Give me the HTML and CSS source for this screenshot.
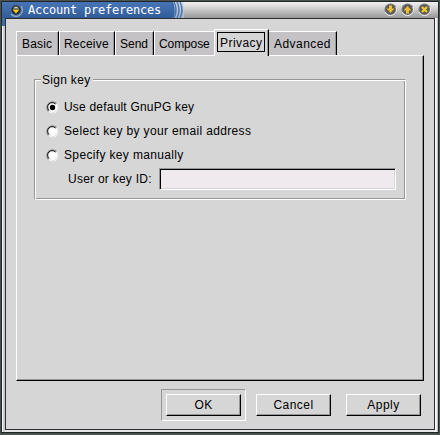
FILE: index.html
```
<!DOCTYPE html>
<html lang="en">
<head>
<meta charset="utf-8">
<title>Account preferences</title>
<link rel="stylesheet" href="styles.css">
</head>
<body>
<div class="window">
  <header class="titlebar">
    <div class="caption">
      <svg class="menu-icon" width="14" height="14" viewBox="0 0 14 14"><circle cx="7" cy="7" r="6" fill="#4d6f9c"/><path d="M2 11a6 6 0 0 0 10-8" fill="none" stroke="#8caad0" stroke-width="1.3"/><circle cx="7" cy="7" r="4.7" fill="#282f38"/><path d="M4 5.500q3-4 6 0z" fill="#c9c9c3"/><path d="M3.500 6.500h7L7 10.500z" fill="#f4cb20"/></svg>
      <h1>Account preferences</h1>
    </div>
    <svg class="waves" width="12" height="16" viewBox="0 0 12 16"><path d="M0 0h1q3 8 1 16H0z" fill="#3b66a5"/><path d="M2 0q4 8 0 16M5 0q4 8 0 16M8 0q4 8 0 16" fill="none" stroke="#4d78b1" stroke-width="1.6"/></svg>
    <div class="controls">
      <svg width="13" height="13" viewBox="0 0 13 13"><circle cx="6.5" cy="6.5" r="6" fill="#777"/><path d="M1 9a6 6 0 0 0 11-5" fill="none" stroke="#eee"/><circle cx="6.5" cy="6.5" r="4.7" fill="#5c5a56"/><path d="M5 2.5h3v3h2.5l-4 4.5-4-4.5H5z" fill="#efbd32"/></svg>
      <svg width="13" height="13" viewBox="0 0 13 13"><circle cx="6.5" cy="6.5" r="6" fill="#777"/><path d="M1 9a6 6 0 0 0 11-5" fill="none" stroke="#eee"/><circle cx="6.5" cy="6.5" r="4.7" fill="#5c5a56"/><path d="M5 10.500h3v-3h2.500l-4-4.500-4 4.500H5z" fill="#efbd32"/></svg>
      <svg width="13" height="13" viewBox="0 0 13 13"><circle cx="6.500" cy="6.500" r="6" fill="#777"/><path d="M1 9a6 6 0 0 0 11-5" fill="none" stroke="#eee"/><circle cx="6.500" cy="6.500" r="4.700" fill="#5c5a56"/><path d="M4 4l5 5M9 4L4 9" stroke="#f0c92c" stroke-width="2.300"/></svg>
    </div>
  </header>
  <main class="client">
    <nav class="tabs">
      <div class="tab basic"><span>Basic</span></div>
      <div class="tab receive"><span>Receive</span></div>
      <div class="tab send"><span>Send</span></div>
      <div class="tab compose"><span>Compose</span></div>
      <div class="tab privacy active"><span>Privacy</span></div>
      <div class="tab advanced"><span>Advanced</span></div>
    </nav>
    <section class="page">
      <div class="group">
        <div class="group-title"><span>Sign key</span></div>
        <div class="option"><svg width="13" height="13" viewBox="0 0 13 13"><circle cx="6.500" cy="6.500" r="6" fill="#fff"/><path d="M2.500 10.500a5.500 5.500 0 0 1 8-8" fill="none" stroke="#888" stroke-width="1.200"/><path d="M3 9.500a4.500 4.500 0 0 1 6.500-6.500" fill="none" stroke="#000"/><path d="M10.700 3.500a5 5 0 0 1-7 7" fill="none" stroke="#d6d6d6" stroke-width=".8"/><circle cx="6.500" cy="6.500" r="2.700"/></svg><span class="o1">Use default GnuPG key</span></div>
        <div class="option"><svg width="13" height="13" viewBox="0 0 13 13"><circle cx="6.500" cy="6.500" r="6" fill="#fff"/><path d="M2.500 10.500a5.500 5.500 0 0 1 8-8" fill="none" stroke="#888" stroke-width="1.200"/><path d="M3 9.500a4.500 4.500 0 0 1 6.500-6.500" fill="none" stroke="#000"/><path d="M10.700 3.500a5 5 0 0 1-7 7" fill="none" stroke="#d6d6d6" stroke-width=".8"/></svg><span class="o2">Select key by your email address</span></div>
        <div class="option"><svg width="13" height="13" viewBox="0 0 13 13"><circle cx="6.500" cy="6.500" r="6" fill="#fff"/><path d="M2.500 10.500a5.500 5.500 0 0 1 8-8" fill="none" stroke="#888" stroke-width="1.200"/><path d="M3 9.500a4.500 4.500 0 0 1 6.500-6.500" fill="none" stroke="#000"/><path d="M10.700 3.500a5 5 0 0 1-7 7" fill="none" stroke="#d6d6d6" stroke-width=".8"/></svg><span class="o3">Specify key manually</span></div>
        <div class="key-row"><span class="key-label">User or key ID:</span><div class="entry"></div></div>
      </div>
    </section>
    <footer class="actions">
      <div class="default-frame"><div class="button">OK</div></div>
      <div class="button cancel">Cancel</div>
      <div class="button apply">Apply</div>
    </footer>
  </main>
</div>
</body>
</html>
```
FILE: styles.css
```
* { box-sizing: border-box; }
body {
  margin: 0;
  width: 440px;
  height: 435px;
  padding: 1px 1px 2px 1px;
  background: #4a524f;
  overflow: hidden;
  font: 12px/14px "Liberation Sans", Arial, sans-serif;
  letter-spacing: 0.45px;
  color: #000;
  white-space: nowrap;
}
.window {
  height: 432px;
  padding: 0 3px 2px 3px;
  border: 1px solid #20262a;
  background: linear-gradient(#3f6cab 0 24px, transparent 24px) left top / 4px 100% no-repeat,
    linear-gradient(90deg, #f4f4f4 0 1px, #a8a8a8 2px, #e9e5e9 3px, #e9e5e9 432px, #fff 434px, #b0b0b0 436px);
}
.titlebar {
  display: flex;
  height: 16px;
  margin: 0 -3px;
  background: linear-gradient(#f2f2f2, #d0d0d0 40%, #979797);
}
.caption {
  display: flex;
  width: 170px;
  background: linear-gradient(#4674b5, #3d69a8 55%, #305a98);
}
.menu-icon { margin: 1px 5px 0 7px; }
h1 {
  margin: 0;
  font: 12px/16px "DejaVu Sans Mono", monospace;
  letter-spacing: -0.22px;
  color: #fff;
}
.waves { background: linear-gradient(#dfe3ea, #a9b4c4); }
.controls {
  display: flex;
  gap: 4px;
  margin: 1px 7px 0 auto;
}
.client {
  height: 412px;
  padding: 10px 10px 0 10px;
  border: 1px solid #2c2f31;
  background: #d6d6d6;
}
.tabs { display: flex; align-items: flex-end; height: 26px; }
.tab {
  flex: none;
  height: 24px;
  padding: 5px 0 0 5px;
  border-top: 1px solid #fff;
  border-left: 1px solid #fff;
  border-right: 1px solid #000;
  background: #c4c2c4;
  box-shadow: inset -1px 0 #969696;
}
.basic { width: 43px; letter-spacing: 0.15px; }
.receive { width: 56px; padding-left: 4px; letter-spacing: 0.2px; }
.send { width: 39px; padding-left: 4px; letter-spacing: 0; }
.compose { width: 60px; padding-left: 4px; border-right: 0; box-shadow: none; letter-spacing: -0.1px; }
.privacy { width: 55px; }
.advanced { width: 68px; border-left: 0; }
.tab.active {
  height: 27px;
  padding: 2px 0 0 2px;
  margin-bottom: -1px;
  background: #d6d6d6;
  position: relative;
}
.active span {
  display: block;
  width: 48px;
  height: 20px;
  padding: 3px 0 0 2px;
  border: 1px solid #000;
}
.page {
  width: 408px;
  height: 326px;
  padding: 16px 17px 0 17px;
  border: 1px solid;
  border-color: #fff #000 #000 #fff;
  box-shadow: inset -1px -1px #969696;
}
.group {
  width: 372px;
  height: 121px;
  margin-top: 7px;
  border: 1px solid #969696;
  box-shadow: inset 1px 1px #fff;
  border-right-color: #fff;
  border-bottom-color: #fff;
  background: linear-gradient(#969696, #969696) right top / 1px 100% no-repeat,
    linear-gradient(#969696, #969696) left bottom / 100% 1px no-repeat;
}
.group-title { height: 17px; margin: -8px 0 0 6px; letter-spacing: 0.3px; }
.group-title span {
  display: inline-block;
  width: 52px;
  padding: 1px 0 0 1px;
  background: #d6d6d6;
}
.option {
  display: flex;
  align-items: center;
  gap: 5px;
  height: 24px;
  padding-left: 11px;
}
.o1 { letter-spacing: 0.2px; }
.o2 { letter-spacing: 0.35px; }
.o3 { letter-spacing: 0.35px; }
.group-title + .option { margin-top: 6px; }
.key-row { display: flex; align-items: center; height: 22px; margin-top: 1px; padding-left: 33px; }
.key-label { width: 91px; letter-spacing: 0.25px; }
.entry {
  width: 237px;
  height: 22px;
  border: 1px solid;
  border-color: #969696 #fff #fff #969696;
  background: #eeeaee;
  box-shadow: inset 1px 1px #000, inset -1px -1px #d6d6d6;
}
.actions { display: flex; align-items: center; height: 32px; margin-top: 8px; padding-left: 145px; }
.default-frame {
  width: 85px;
  height: 32px;
  padding: 4px;
  border: 1px solid;
  border-color: #969696 #fff #fff #969696;
}
.button {
  flex: none;
  width: 75px;
  height: 22px;
  padding-top: 3px;
  border: 1px solid;
  border-color: #fff #000 #000 #fff;
  box-shadow: inset -1px -1px #969696;
  text-align: center;
}
.cancel { margin-left: 10px; }
.apply { margin-left: 15px; }
```
